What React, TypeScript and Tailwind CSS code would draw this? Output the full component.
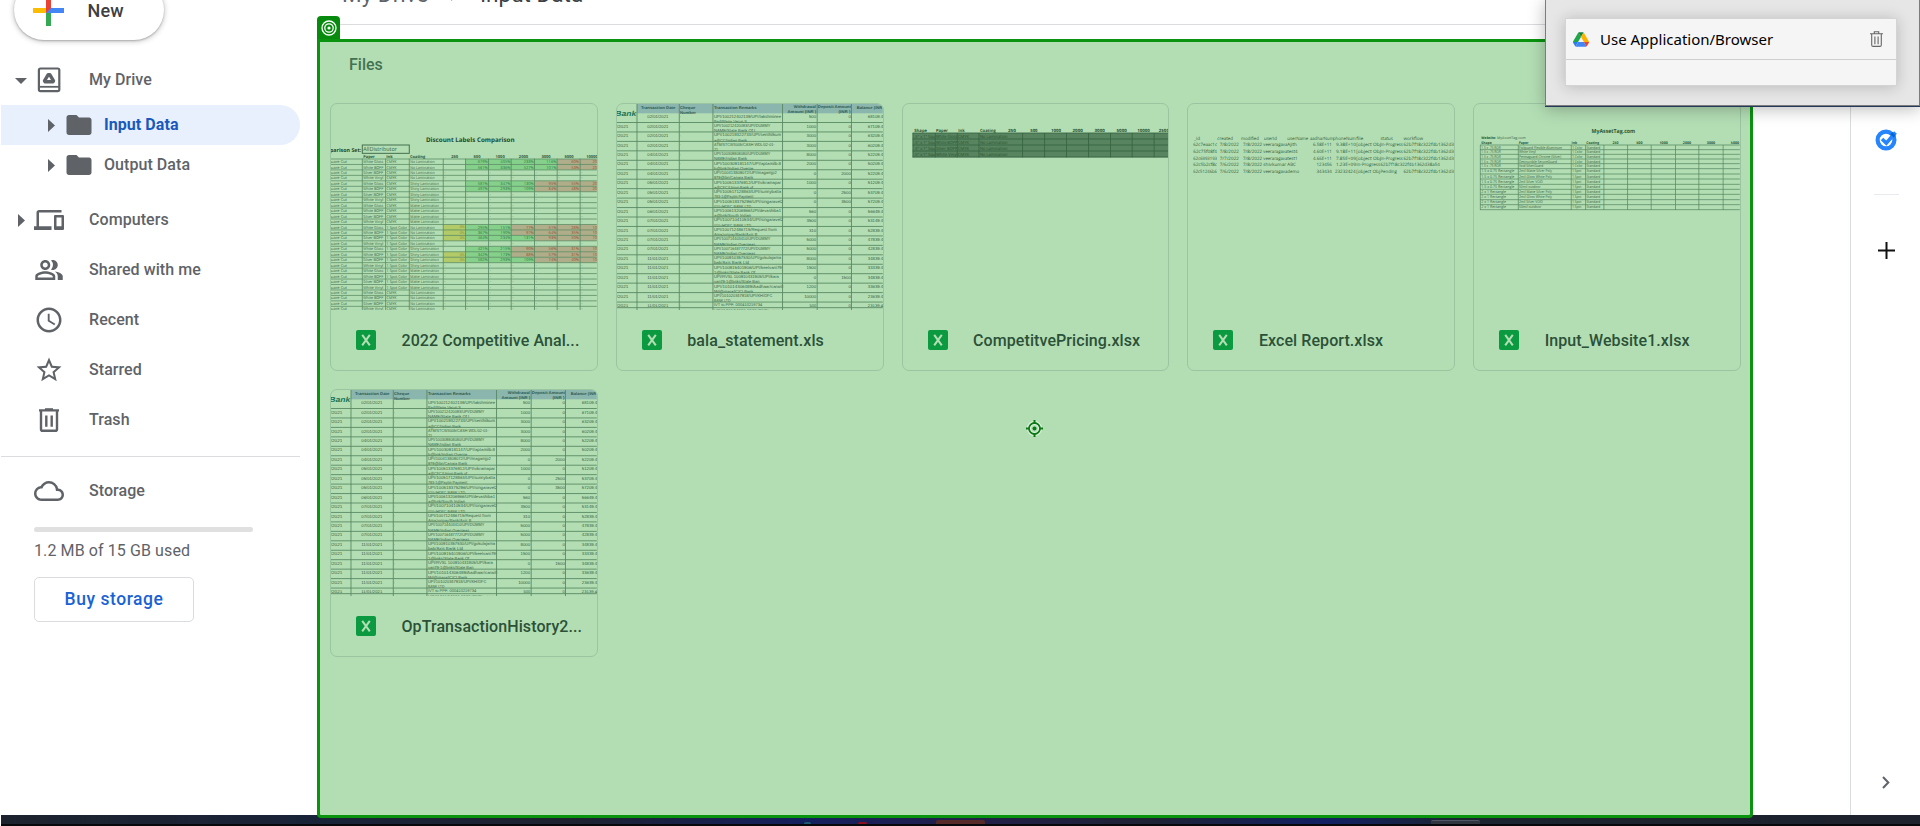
import React from "react";
import { MdOutlineDevices, MdOutlinePeopleAlt, MdAccessTime, MdStarBorder, MdCloudQueue, MdFolder } from "react-icons/md";

type TextProps = {
  x: number;
  y: number;
  s: number;
  t: string;
  w?: number;
  b?: boolean;
  i?: boolean;
  c?: string;
  end?: boolean;
};

function T({ x, y, s, t, w, b, i, c = "#37633f", end }: TextProps) {
  return (
    <text
      x={x}
      y={y + s * 0.35}
      fontSize={s}
      fontWeight={b ? 700 : 400}
      fontStyle={i ? "italic" : "normal"}
      fill={c}
      textAnchor={end ? "end" : "start"}
      textLength={w}
      lengthAdjust="spacingAndGlyphs"
      textRendering="geometricPrecision"
    >
      {t}
    </text>
  );
}

const LINE = "#56875f";

function LabelsSheet() {
  const cols = [157, 227, 298, 400, 467, 536, 604, 674, 742, 811];
  const papers = ["White Gloss", "White BOPP", "Silver BOPP", "White Vinyl"];
  const coats = ["No Lamination", "Shiny Lamination", "Matte Lamination"];
  const rowY = (r: number) => 215 + 16.37 * r;
  const marks: Record<number, { yellow: boolean; split: number; v: string[] }> = {
    0: { yellow: false, split: 742, v: ["679%", "405%", "233%", "116%", "60%", "20%"] },
    1: { yellow: false, split: 742, v: ["561%", "336%", "527%", "101%", "53%", "20%"] },
    4: { yellow: false, split: 674, v: ["581%", "347%", "130%", "95%", "55%", "20%"] },
    5: { yellow: false, split: 674, v: ["497%", "293%", "109%", "84%", "48%", "20%"] },
    12: { yellow: true, split: 604, v: ["295%", "151%", "77%", "51%", "28%", "10%"] },
    13: { yellow: true, split: 604, v: ["367%", "190%", "97%", "64%", "35%", "10%"] },
    14: { yellow: true, split: 674, v: ["464%", "234%", "131%", "93%", "50%", "10%"] },
    16: { yellow: false, split: 604, v: ["421%", "215%", "90%", "56%", "31%", "10%"] },
    17: { yellow: true, split: 604, v: ["342%", "173%", "88%", "57%", "31%", "10%"] },
    18: { yellow: true, split: 674, v: ["582%", "293%", "109%", "74%", "40%", "10%"] },
  };
  const heads: [number, string][] = [[160, "Paper"], [229, "Ink"], [300, "Coating"], [424, "250"], [491, "500"], [557, "1000"], [627, "2000"], [695, "3000"], [764, "5000"], [829, "10000"]];
  return (
    <svg className="block h-[206px] w-full" viewBox="63 42 798 618" preserveAspectRatio="none" fontFamily='"Open Sans", sans-serif'>
      <T x={348} y={150} s={19} t="Discount Labels Comparison" w={266} b c="#1d4a2b" />
      <T x={60} y={179} s={16} t="parison Set:" w={94} b c="#1d4a2b" />
      <rect x={157} y={165} width={141} height={25} fill="none" stroke="#42704c" strokeWidth={3} />
      <T x={160} y={178} s={17} t="AllDistributor" w={101} />
      {heads.map(([x, t]) => (
        <T key={t} x={x} y={199} s={12} t={t} b c="#2b5738" />
      ))}
      {Object.entries(marks).map(([k, m]) => {
        const y = rowY(Number(k)) - 8;
        return (
          <g key={k}>
            {m.yellow && <rect x={400} y={y} width={67} height={16.4} fill="#b2cb68" />}
            <rect x={467} y={y} width={m.split - 467} height={16.4} fill="#85d18c" />
            <rect x={m.split} y={y} width={861 - m.split} height={16.4} fill="#b0ae8a" />
          </g>
        );
      })}
      {Array.from({ length: 28 }, (_, r) => {
        const y = rowY(r);
        const m = marks[r];
        const spot = r >= 12 && r < 24;
        return (
          <g key={r}>
            <line x1={63} x2={861} y1={y - 8} y2={y - 8} stroke={LINE} strokeWidth={2.2} />
            <T x={56} y={y} s={12} t="quare Cut" w={55} />
            <T x={160} y={y} s={12} t={papers[r % 4]} w={60} />
            <T x={230} y={y} s={12} t={spot ? "1 Spot Color" : "CMYK"} w={spot ? 62 : 30} />
            <T x={301} y={y} s={12} t={coats[Math.floor(r / 4) % 3]} w={r % 12 < 4 ? 73 : 86} />
            {m ? (
              <>
                {m.yellow && <T x={465} y={y} s={11} t="0%" end c="#8a8a3a" />}
                {m.v.map((v, j) => (
                  <T key={j} x={[534, 602, 672, 740, 808, 872][j]} y={y} s={12} t={v} end c={cols[4 + j] >= m.split ? "#93502f" : "#2f7a3c"} />
                ))}
              </>
            ) : (
              cols.slice(3).map((x) => <T key={x} x={x + 3} y={y} s={12} t="-" />)
            )}
          </g>
        );
      })}
      {cols.map((x) => (
        <line key={x} x1={x} x2={x} y1={206} y2={660} stroke={LINE} strokeWidth={2.4} />
      ))}
    </svg>
  );
}

const bank: [string, string, string, string, string, string][] = [
  ["02/01/2021", "UPI/100212402139/UPI/lakshminee", "Bad/Wana Varun S", "500", "0", "68109.4"],
  ["02/01/2021", "UPI/100212420093/UPI/DUMMY", "NAME/State Bank Of I", "1000", "0", "67109.4"],
  ["02/01/2021", "UPI/100219322733/UPI/senthilkum", "a@CC/Indian Bank", "3000", "0", "63209.4"],
  ["02/01/2021", "ATM/STCW3005/CASH WDL/02-01-", "21", "3000", "0", "60209.4"],
  ["04/01/2021", "UPI/100309808080/UPI/DUMMY", "NAME/Indian Bank", "8000", "0", "52209.4"],
  ["04/01/2021", "UPI/100309181147/UPI/aptamilb.8", "b@bnk/Indian Overse", "2000", "0", "50209.4"],
  ["04/01/2021", "UPI/100413809072/UPI/magamjp2", "979@ibn/Canara Bank", "0", "2000", "52209.4"],
  ["05/01/2021", "UPI/100513376912/UPI/vikramapar", "a@CFC/Union Bank of", "1000", "0", "51209.4"],
  ["05/01/2021", "UPI/100517128863/UPI/sunnybatta", "783-1@Paytm Payment", "0", "2500", "53709.4"],
  ["05/01/2021", "UPI/100518375296/UPI/singaravel2", "010-/HDFC BANK LTD", "0", "3500", "57209.4"],
  ["06/01/2021", "UPI/100613206966/UPI/devashiba1", "a@bnk/South Indian", "560", "0", "56649.4"],
  ["07/01/2021", "UPI/100710410534/UPI/singaravel2", "010-/HDFC BANK LTD", "3500", "0", "53149.4"],
  ["07/01/2021", "UPI/100712486715/Request from", "Amazonpay/Bank/Axis B", "310", "0", "52839.4"],
  ["07/01/2021", "UPI/100714403410/UPI/DUMMY", "NAME/Indian Overseas", "5000", "0", "47839.4"],
  ["07/01/2021", "UPI/100716487772/UPI/DUMMY", "NAME/Indian Overseas", "5000", "0", "42839.4"],
  ["11/01/2021", "UPI/100910357530/UPI/gokulajama", "bab/Axis Bank Ltd", "8000", "0", "34839.4"],
  ["11/01/2021", "UPI/100915401906/UPI/keelvani79-", "1@bnks/State Bank Of", "1500", "0", "33339.4"],
  ["11/01/2021", "UPI/RVSL 100910431905/UPI/kara", "van79-1@bnks/State Ban", "0", "1500", "34839.4"],
  ["11/01/2021", "UPI/101014306489/Aadhaar/carwill", "Md@imara/ICICI Bank", "1200", "0", "33639.4"],
  ["11/01/2021", "UPI/101020347918/UPI/KH/DFC", "BANK LTD", "10000", "0", "23639.4"],
];

function BankSheet() {
  const h = "#2d5b52";
  return (
    <svg className="block h-[206px] w-full" viewBox="51 42 798 618" preserveAspectRatio="none" fontFamily='"Liberation Sans", sans-serif'>
      <rect x={111} y={42} width={738} height={28} fill="#8ab6ad" />
      <T x={46} y={70} s={22} t="Bank" w={63} b i c="#177557" />
      <T x={123} y={52} s={12} t="Transaction Date" w={103} b c={h} />
      <T x={240} y={52} s={12} t="Cheque" w={46} b c={h} />
      <T x={240} y={67} s={12} t="Number" w={48} b c={h} />
      <T x={342} y={52} s={12} t="Transaction Remarks" w={128} b c={h} />
      <T x={582} y={51} s={12} t="Withdrawal" w={66} b c={h} />
      <T x={563} y={66} s={12} t="Amount (INR )" w={86} b c={h} />
      <T x={654} y={51} s={12} t="Deposit Amount" w={99} b c={h} />
      <T x={716} y={66} s={12} t="(INR )" w={36} b c={h} />
      <T x={771} y={52} s={12} t="Balance (INR )" w={84} b c={h} />
      {bank.map((r, k) => {
        const y = 80 + 28.35 * k;
        return (
          <g key={k}>
            {k > 0 && <T x={50} y={y} s={13} t="/2021" w={35} />}
            <T x={142} y={y} s={13} t={r[0]} w={63} />
            <T x={239} y={y} s={12} t="-" />
            <T x={342} y={y - 2} s={13} t={r[1]} w={r[1].length * 6.5} />
            <T x={342} y={y + 13.5} s={13} t={r[2]} w={r[2].length * 6.2} />
            <T x={649} y={y} s={13} t={r[3]} end />
            <T x={753} y={y} s={13} t={r[4]} end />
            <T x={804} y={y} s={13} t={r[5]} w={46} />
            <line x1={51} x2={849} y1={y + 17.5} y2={y + 17.5} stroke={LINE} strokeWidth={2.6} />
          </g>
        );
      })}
      <T x={50} y={646} s={12} t="/2021" w={35} />
      <T x={142} y={646} s={12} t="11/01/2021" w={63} />
      <T x={239} y={646} s={12} t="-" />
      <T x={342} y={645} s={12} t="IVT to PPF: 000410219734" w={145} />
      <T x={649} y={646} s={12} t="500" end />
      <T x={753} y={646} s={12} t="0" end />
      <T x={804} y={646} s={12} t="23139.4" w={46} />
      <line x1={51} x2={849} y1={653} y2={653} stroke={LINE} strokeWidth={2.6} />
      <T x={342} y={661} s={12} t="UPI/101124801477/UPI/Paytmqr" w={204} />
      {[111, 238, 339, 548, 652, 755].map((x) => (
        <line key={x} x1={x} x2={x} y1={42} y2={660} stroke={LINE} strokeWidth={2.6} />
      ))}
    </svg>
  );
}

function PricingSheet() {
  const heads: [number, string, number][] = [[73, "Shape", 38], [138, "Paper", 36], [205, "Ink", 19], [270, "Coating", 48], [354, "250", 24], [421, "500", 22], [483, "1000", 30], [548, "2000", 31], [614, "3000", 31], [680, "5000", 31], [742, "10000", 38], [807, "25000", 38]];
  return (
    <svg className="block h-[206px] w-full" viewBox="39 42 798 618" preserveAspectRatio="none" fontFamily='"Open Sans", sans-serif'>
      {heads.map(([x, t, w]) => (
        <T key={t} x={x} y={121} s={13} t={t} w={w} b c="#24502f" />
      ))}
      <rect x={68} y={129} width={769} height={73} fill="#588560" />
      {["White Gloss", "White BOPP", "Silver BOPP", "White Vinyl"].map((p, k) => (
        <g key={p}>
          <T x={73} y={139 + 18 * k} s={13} t={'.5" x 1" Squ'} w={62} c="#28512f" />
          <T x={138} y={139 + 18 * k} s={13} t={p} w={64} c="#28512f" />
          <T x={204} y={139 + 18 * k} s={13} t="CMYK" w={33} c="#28512f" />
          <T x={270} y={139 + 18 * k} s={13} t="No Lamination" w={83} c="#28512f" />
        </g>
      ))}
      {[129, 147, 165, 183, 201].map((y) => (
        <line key={y} x1={68} x2={837} y1={y} y2={y} stroke="#376541" strokeWidth={2.6} />
      ))}
      {[69, 136, 202, 267, 398, 464, 530, 596, 662, 727, 793].map((x) => (
        <line key={x} x1={x} x2={x} y1={129} y2={202} stroke="#376541" strokeWidth={2.6} />
      ))}
    </svg>
  );
}

function ReportSheet() {
  const rows: [number, number, string][][] = [
    [[57, 18, "_id"], [127, 47, "created"], [198, 54, "modified"], [267, 39, "userId"], [337, 63, "userName"], [405, 71, "aadharNum"], [474, 69, "phoneNum"], [544, 21, "file"], [617, 37, "status"], [686, 59, "workflow"]],
    [[55, 71, "62c7eaac1c"], [134, 58, "7/8/2022"], [204, 58, "7/8/2022"], [265, 72, "veeraragava"], [337, 29, "Ajith"], [414, 57, "6.58E+11"], [483, 60, "9.38E+10"], [544, 74, "[object Obj"], [617, 67, "In-Progress"], [686, 151, "62b7f18c322f4b1362d3"]],
    [[55, 71, "62c75f08f4"], [134, 58, "7/8/2022"], [204, 58, "7/8/2022"], [265, 72, "veeraragava"], [337, 31, "test4"], [414, 57, "4.60E+11"], [483, 60, "9.18E+11"], [544, 74, "[object Obj"], [617, 67, "In-Progress"], [686, 151, "62b7f18c322f4b1362d3"]],
    [[55, 71, "62c6993193"], [134, 58, "7/7/2022"], [204, 58, "7/8/2022"], [265, 72, "veeraragava"], [337, 31, "test1"], [414, 57, "4.66E+11"], [483, 60, "7.85E+09"], [544, 74, "[object Obj"], [617, 67, "In-Progress"], [686, 151, "62b7f18c322f4b1362d3"]],
    [[55, 71, "62c5b2cf8c"], [134, 58, "7/6/2022"], [204, 58, "7/8/2022"], [265, 69, "shivkumar"], [337, 26, "ABC"], [425, 46, "123456"], [483, 60, "1.23E+09"], [544, 72, "In-Progress"], [617, 178, "62b7f18c322f4b1362d38a54"]],
    [[55, 71, "62c51246b6"], [134, 58, "7/6/2022"], [204, 58, "7/8/2022"], [265, 72, "veeraragava"], [337, 36, "demo"], [425, 46, "343434"], [480, 62, "23232424"], [544, 72, "[object Obj"], [617, 49, "Pending"], [686, 151, "62b7f18c322f4b1362d3"]],
  ];
  return (
    <svg className="block h-[206px] w-full" viewBox="39 42 798 618" preserveAspectRatio="none" fontFamily='"Open Sans", sans-serif'>
      {rows.map((r, k) =>
        r.map(([x, w, t]) => <T key={`${k}-${x}`} x={x} y={144.5 + 20 * k} s={13.5} t={t} w={w} c="#30603b" />)
      )}
    </svg>
  );
}

function AssetSheet() {
  const ys = [172, 186, 200, 214, 228, 243, 259, 274, 290, 305, 320, 336, 351];
  const papers: [string, number][] = [["Foilguard Flexible Aluminum", 129], ["White Vinyl", 51], ["Permaguard Chrome (Silver)", 127], ["Destructible SecureGuard", 114], ["Void SilverGuard", 73], ["2mil Matte Silver Poly", 99], ["2mil Gloss White Poly", 99], ["2mil Silver VOID", 72], ["50mil outdoor", 65], ["2mil Matte Silver Poly", 99], ["2mil Gloss White Poly", 99], ["2mil Silver VOID", 72], ["50mil outdoor", 67]];
  const heads: [number, string, number][] = [[64, "Shape", 31], [176, "Paper", 30], [335, "Ink", 17], [379, "Coating", 39], [458, "250", 18], [529, "500", 19], [599, "1000", 25], [669, "2000", 25], [741, "3000", 25], [813, "5000", 25]];
  return (
    <svg className="block h-[206px] w-full" viewBox="42 42 798 618" preserveAspectRatio="none" fontFamily='"Open Sans", sans-serif'>
      <T x={395} y={123} s={17} t="MyAssetTag.com" w={131} b c="#2b5a36" />
      <T x={64} y={142} s={11} t="Website:" w={44} b c="#2b5a36" />
      <T x={111} y={142} s={11} t="MyAssetTag.com" w={86} />
      {heads.map(([x, t, w]) => (
        <T key={t} x={x} y={157} s={11} t={t} w={w} b c="#2b5a36" />
      ))}
      {ys.map((y, k) => (
        <g key={y}>
          <line x1={60} x2={840} y1={y - 7} y2={y - 7} stroke={LINE} strokeWidth={2.2} />
          <T x={64} y={y} s={11.5} t={k < 5 ? "1.5 x .75 ROR" : k < 9 ? "1.5 x 0.75 Rectangle" : "2 x 1 Rectangle"} w={k < 5 ? 58 : k < 9 ? 99 : 74} />
          <T x={177} y={y} s={11.5} t={papers[k][0]} w={papers[k][1]} />
          <T x={337} y={y} s={11.5} t={k < 5 ? "1 Color" : "1 Spot"} w={k < 5 ? 31 : 27} />
          <T x={380} y={y} s={11.5} t="Standard" w={41} />
        </g>
      ))}
      <line x1={60} x2={840} y1={359} y2={359} stroke={LINE} strokeWidth={2.2} />
      {[61, 175, 334, 377, 432, 503, 574, 647, 717, 790].map((x) => (
        <line key={x} x1={x} x2={x} y1={165} y2={360} stroke={LINE} strokeWidth={2.2} />
      ))}
    </svg>
  );
}

function Caret({ open }: { open?: boolean }) {
  return open ? (
    <svg className="h-[6px] w-[12px]" viewBox="0 0 12 6" fill="#5f6368"><path d="M0 0h12L6 6z" /></svg>
  ) : (
    <svg className="h-[13px] w-[7px]" viewBox="0 0 7 13" fill="#5f6368"><path d="M0 0v13l7-6.5z" /></svg>
  );
}

function DriveIcon() {
  return (
    <svg className="size-[30px] shrink-0" viewBox="0 0 30 30" fill="none" stroke="#5f6368">
      <rect x="4.9" y="3.5" width="20.4" height="22.7" rx="1.6" strokeWidth="2.2" />
      <path d="M5 21.8h20" strokeWidth="1.8" />
      <path d="M14.2 9.6h1.6l3.7 6.2-.5.9h-8l-.5-.9z" strokeWidth="3.4" strokeLinejoin="round" />
    </svg>
  );
}

function TrashIcon() {
  return (
    <svg className="size-[30px] shrink-0" viewBox="0 0 30 30" fill="none" stroke="#5f6368" strokeWidth="2.4">
      <path d="M7 6v18.2q0 1.6 1.6 1.6h12.8q1.6 0 1.6-1.6V6M5 5.4h20" />
      <path d="M11 4.2h8" strokeWidth="2" />
      <path d="M12.3 10.5v11.3M17.7 10.5v11.3" />
    </svg>
  );
}

function NavRow({ icon, label, caret }: { icon: React.ReactNode; label: string; caret?: React.ReactNode }) {
  return (
    <div className="flex h-[50px] items-center">
      <span className="flex w-[34px] shrink-0 pl-[18px]">{caret}</span>
      {icon}
      <span className="ml-[25px]">{label}</span>
    </div>
  );
}

function Sidebar() {
  return (
    <aside className="flex w-[317px] shrink-0 flex-col pl-px font-medium text-[#5f6368]">
      <div className="-mt-5 ml-[13px] flex h-[60px] w-[150px] shrink-0 items-center rounded-full bg-white pl-[19px] shadow-[0_1px_2px_rgba(60,64,67,0.35),0_1px_4px_2px_rgba(60,64,67,0.16)]">
        <svg className="size-[31px]" viewBox="0 0 31 31">
          <path fill="#fbbc04" d="M0 13h13v5H0z" />
          <path fill="#4285f4" d="M15 13h16v5H13z" />
          <path fill="#34a853" d="M13 18h5v13h-5z" />
          <path fill="#ea4335" d="M13 0h5v13l-5 5z" />
        </svg>
        <span className="ml-[23.5px] text-[18px] tracking-[0.2px] text-[#3c4043]">New</span>
      </div>
      <nav className="-ml-px mt-[15px] flex flex-col text-[16px] leading-5 tracking-[0.06px]">
        <div className="flex h-[50px] items-center">
          <span className="flex w-[34px] pl-[15px] pt-[2px]"><Caret open /></span>
          <DriveIcon />
          <span className="ml-[25px]">My Drive</span>
        </div>
        <div className="ml-px flex h-10 w-[299px] items-center rounded-r-full bg-[#e8f0fe]">
          <span className="flex w-[63px] pl-[47px]"><Caret /></span>
          <MdFolder size={30} />
          <span className="ml-[10px] font-bold text-[#185abc]">Input Data</span>
        </div>
        <div className="ml-px flex h-10 items-center">
          <span className="flex w-[63px] pl-[47px]"><Caret /></span>
          <MdFolder size={30} />
          <span className="ml-[10px]">Output Data</span>
        </div>
        <div className="mt-[10px] flex flex-col">
          <NavRow icon={<MdOutlineDevices size={30} />} label="Computers" caret={<Caret />} />
          <NavRow icon={<MdOutlinePeopleAlt size={30} />} label="Shared with me" />
          <NavRow icon={<MdAccessTime size={30} />} label="Recent" />
          <NavRow icon={<MdStarBorder size={30} />} label="Starred" />
          <NavRow icon={<TrashIcon />} label="Trash" />
        </div>
        <div className="ml-px mt-[11px] h-px w-[299px] bg-[#dadce0]" />
        <div className="mt-[9px]">
          <NavRow icon={<MdCloudQueue size={30} />} label="Storage" />
        </div>
      </nav>
      <div className="ml-[33px] mt-[11px] h-[5px] w-[219px] rounded-full bg-[#e0e0e0]" />
      <p className="ml-[33px] mt-[9px] text-[16px] font-normal leading-5 tracking-[0.1px]">1.2 MB of 15 GB used</p>
      <button className="ml-[33px] mt-4 h-[45px] w-[160px] rounded-[5px] border border-[#dadce0] text-[17.5px] font-medium tracking-[0.55px] text-[#1a62d4]">
        Buy storage
      </button>
    </aside>
  );
}

function FileCard({ name, children }: { name: string; children: React.ReactNode }) {
  return (
    <article className="flex h-[268px] min-w-0 flex-col overflow-hidden rounded-[7px] border border-[#9ac5a0]">
      {children}
      <div className="flex h-[60px] items-center pl-[25px] pr-2">
        <svg className="size-5 shrink-0" viewBox="0 0 20 20">
          <rect width="20" height="20" rx="2" fill="#0c9a41" />
          <path d="M6.2 4.8l7.6 10.6M13.8 4.8L6.2 15.4" stroke="#b3deb4" strokeWidth="2" />
        </svg>
        <span className="ml-[25.5px] whitespace-nowrap pt-px text-[16px] font-medium tracking-[0.08px] text-[#2b5138]">{name}</span>
      </div>
    </article>
  );
}

function TargetMarker() {
  return (
    <svg className="absolute left-[706px] top-[378px] size-[17px]" viewBox="0 0 17 17" fill="none">
      <circle cx="8.5" cy="8.5" r="5.5" stroke="#e4f5e4" strokeWidth="4" />
      <path d="M8.5 0v3M8.5 14v3M0 8.5h3M14 8.5h3" stroke="#0b7a14" strokeWidth="2" />
      <circle cx="8.5" cy="8.5" r="5.5" stroke="#0b7a14" strokeWidth="1.8" />
      <circle cx="8.5" cy="8.5" r="2" fill="#0b7a14" />
    </svg>
  );
}

function Main() {
  return (
    <main className="z-10 flex h-[818px] w-[1436px] shrink-0 flex-col">
      <div className="h-4 shrink-0 pl-[25px] text-[22.5px]">
        <div className="-mt-5 flex h-7 items-center whitespace-nowrap leading-7">
          <span className="w-[108px] text-[#5f6368]">My Drive</span>
          <svg className="h-[13px] w-2" viewBox="0 0 8 13" fill="none" stroke="#5f6368" strokeWidth="2"><path d="M1 1l5 5.5-5 5.5" /></svg>
          <span className="ml-[22px] text-[#3c4043]">Input Data</span>
        </div>
      </div>
      <div className="flex h-[23px] shrink-0">
        <div className="flex w-[23px] items-center justify-center rounded-t-[4px] bg-[#078a0d]">
          <svg className="size-4" viewBox="0 0 16 16" fill="none" stroke="#fff">
            <circle cx="8" cy="8" r="7" strokeWidth="1.3" />
            <circle cx="8" cy="8" r="4.2" strokeWidth="1.3" />
            <circle cx="8" cy="8" r="1.6" fill="#fff" stroke="none" />
          </svg>
        </div>
        <div className="mt-2 h-px flex-1 bg-[#dadce0]" />
      </div>
      <section className="relative flex-1 rounded-b-[4px] border-[3px] border-[#0a930f] bg-[#b3deb4] pl-[10px] pr-[9px]">
        <h2 className="h-[61px] pl-[19px] pt-[13px] text-[16px] font-medium leading-5 text-[#437253]">Files</h2>
        <div className="grid grid-cols-5 gap-[18px]">
          <FileCard name="2022 Competitive Anal..."><LabelsSheet /></FileCard>
          <FileCard name="bala_statement.xls"><BankSheet /></FileCard>
          <FileCard name="CompetitvePricing.xlsx"><PricingSheet /></FileCard>
          <FileCard name="Excel Report.xlsx"><ReportSheet /></FileCard>
          <FileCard name="Input_Website1.xlsx"><AssetSheet /></FileCard>
          <FileCard name="OpTransactionHistory2..."><BankSheet /></FileCard>
        </div>
        <TargetMarker />
      </section>
    </main>
  );
}

function DriveLogo() {
  return (
    <svg className="h-[15px] w-[16px]" viewBox="0 0 87.3 78">
      <path d="m6.6 66.85 3.85 6.65c.8 1.4 1.95 2.5 3.3 3.3l13.75-23.8h-27.5c0 1.55.4 3.1 1.2 4.5z" fill="#2b7de9" />
      <path d="m43.65 25-13.75-23.8c-1.35.8-2.5 1.9-3.3 3.3l-25.4 44a9.06 9.06 0 0 0 -1.2 4.5h27.5z" fill="#1fa54a" />
      <path d="m73.55 76.8c1.35-.8 2.5-1.9 3.3-3.3l1.6-2.75 7.65-13.25c.8-1.4 1.2-2.95 1.2-4.5h-27.5l5.85 11.5z" fill="#ea4335" />
      <path d="m43.65 25 13.75-23.8c-1.35-.8-2.9-1.2-4.5-1.2h-18.5c-1.6 0-3.15.45-4.5 1.2z" fill="#188038" />
      <path d="m59.8 53h-32.3l-13.75 23.8c1.35.8 2.9 1.2 4.5 1.2h50.8c1.6 0 3.15-.45 4.5-1.2z" fill="#4285f4" />
      <path d="m73.4 26.5-12.7-22c-.8-1.4-1.95-2.5-3.3-3.3l-13.75 23.8 16.15 28h27.45c0-1.55-.4-3.1-1.2-4.5z" fill="#fbb300" />
    </svg>
  );
}

function ActivityPopup() {
  return (
    <div className="absolute right-0 top-0 z-20 h-[107px] w-[375px] border-b border-[#24395c] shadow-[0_2px_16px_rgba(0,0,0,0.28)]">
      <div className="h-[106px] border-x border-b border-[#7c7c7c] bg-[#e6e6e6] pl-[19px] pr-[22px] pt-[18px]">
        <div className="h-[68px] border border-[#d4d4d4] bg-[#f5f5f5] shadow-[0_1px_14px_rgba(0,0,0,0.2)]">
          <div className="flex h-[41px] items-center border-b border-[#cfcfcf] pl-[7px] pr-[13px]">
            <DriveLogo />
            <span className="ml-[11px] flex-1 whitespace-nowrap font-['Noto_Sans',sans-serif] text-[15px] font-normal text-black">Use Application/Browser</span>
            <svg className="h-4 w-[13px]" viewBox="0 0 13 16" fill="none" stroke="#666" strokeWidth="1.1">
              <path d="M0 2.7h13M4.3 2.5V.7h4.4v1.8M1.7 3v11q0 1.4 1.4 1.4h6.8q1.4 0 1.4-1.4V3M4.9 5.5v7.8M8.1 5.5v7.8" />
            </svg>
          </div>
        </div>
      </div>
    </div>
  );
}

function RightRail() {
  return (
    <aside className="ml-auto flex w-[70px] shrink-0 flex-col items-center border-l border-[#dadce0] pl-px">
      <svg className="mt-[128px] h-[23px] w-[23px]" viewBox="0 0 23 23" fill="none">
        <circle cx="11" cy="12" r="8.4" stroke="#2684fc" strokeWidth="4.2" />
        <path d="M7 11l4.3 4.1L20.5 4.5" stroke="#2684fc" strokeWidth="3.6" />
        <path d="M15.3 6.4l3.6 3.2 1.7-2-3.4-3.5z" fill="#0066da" />
      </svg>
      <div className="mt-[43px] h-px w-[25px] bg-[#e8eaed]" />
      <svg className="mt-[47px] size-[17px]" viewBox="0 0 17 17" stroke="#111" strokeWidth="2"><path d="M8.5 0v17M0 8.5h17" /></svg>
      <svg className="mt-[517px] h-[13px] w-[8px]" viewBox="0 0 8 13" fill="none" stroke="#5f6368" strokeWidth="2"><path d="M1 1l5.3 5.5L1 12" /></svg>
    </aside>
  );
}

function Taskbar() {
  return (
    <footer className="ml-px flex h-[11px] shrink-0 items-end border-b-2 border-[#07080c] bg-[linear-gradient(90deg,#1d232e_0%,#192338_17%,#1e2230_30%,#14205f_42%,#221f4a_50%,#1f2234_60%,#122063_69%,#1c2431_76%,#1d222c_100%)]">
      <div className="ml-[803px] h-[2px] w-[7px] rounded-t-full bg-[#1b5a72]" />
      <div className="ml-[47px] h-[2px] w-[9px] rounded-t-full bg-[#8d0e1e]" />
      <div className="ml-[69px] h-1 w-[49px] rounded-t-[2px] bg-[#552a28]" />
      <div className="ml-[446px] h-1 w-[49px] rounded-t-[2px] border-t border-[#515765] bg-[#30353f]" />
    </footer>
  );
}

export default function App() {
  return (
    <div className="relative flex h-[826px] w-[1920px] flex-col overflow-hidden bg-white font-[Roboto,sans-serif]">
      <div className="flex h-[815px] shrink-0">
        <Sidebar />
        <Main />
        <RightRail />
      </div>
      <Taskbar />
      <ActivityPopup />
    </div>
  );
}
